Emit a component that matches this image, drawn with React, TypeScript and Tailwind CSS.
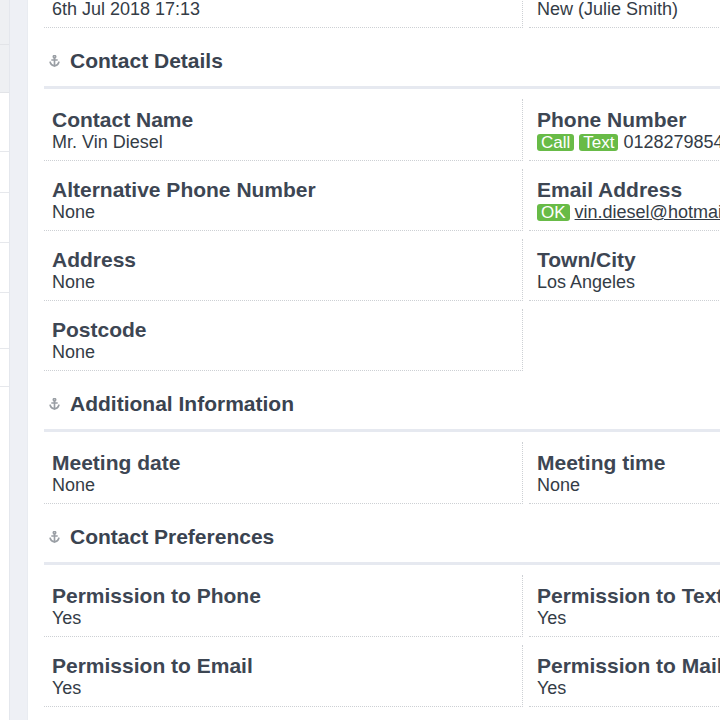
import clsx from "clsx";
import type { ReactNode } from "react";

interface FieldProps {
  label: string;
  left?: boolean;
  children: ReactNode;
}

// Single label/value cell in the record grid
const Field = ({ label, left, children }: FieldProps) => (
  <div
    className={clsx(
      "pt-[9px] pb-[8px] pl-2 border-dotted border-[#cdd0d4] border-b",
      left && "border-r"
    )}
  >
    <div className="text-[21px] leading-6 font-bold text-[#3d4653] whitespace-nowrap">{label}</div>
    <div className="text-[18px] leading-5 text-[#343c46] whitespace-nowrap">{children}</div>
  </div>
);

const Badge = ({ text }: { text: string }) => (
  <span className="inline-block bg-[#68bb47] text-white text-[17px] leading-[17px] px-[4px] rounded-[3px] mr-[5px]">
    {text}
  </span>
);

const SectionIcon = () => (
  <svg width="11" height="12" viewBox="0 0 10 11" fill="none" stroke="#9a9fa5" strokeWidth="1.5" strokeLinecap="round">
    <circle cx="5" cy="1.6" r="1.1" />
    <path d="M5 2.7v7.3" />
    <path d="M2.6 4.6h4.8" />
    <path d="M1 6.6c0.6 2 2 3.2 4 3.4c2-0.2 3.4-1.4 4-3.4" />
  </svg>
);

const SectionHeader = ({ title }: { title: string }) => (
  <div className="flex items-center pt-[21px] pb-[13px] border-b-[3px] border-[#e6e9f0]">
    <span className="ml-[5px] w-[11px] flex">
      <SectionIcon />
    </span>
    <span className="ml-[10px] text-[21px] leading-6 font-bold text-[#3a4350] whitespace-nowrap">{title}</span>
  </div>
);

const Grid = ({ children, first }: { children: ReactNode; first?: boolean }) => (
  <div className={clsx("grid grid-cols-[479px_478px] gap-x-[6px] gap-y-2", first ? "" : "pt-[10px]")}>
    {children}
  </div>
);

const Empty = () => <div />;

// Narrow list column on the far left, mostly scrolled out of view
const SideList = () => (
  <div className="w-[9px] shrink-0 flex flex-col bg-white">
    <div className="h-[45px] bg-[#eef0f3] border-b border-[#e2e4e8]" />
    <div className="h-[48px] bg-[#eef0f3] border-b border-[#e2e4e8]" />
    <div className="h-[59px] border-b border-[#e6e8ec]" />
    <div className="h-[41px] border-b border-[#e6e8ec]" />
    <div className="h-[50px] border-b border-[#e6e8ec]" />
    <div className="h-[50px] border-b border-[#e6e8ec]" />
    <div className="h-[56px] border-b border-[#e6e8ec]" />
    <div className="h-[38px] border-b border-[#e6e8ec]" />
  </div>
);

export default function App() {
  return (
    <div
      className="w-[720px] h-[720px] overflow-hidden flex bg-white"
      style={{ fontFamily: '"Liberation Sans", Arial, sans-serif' }}
    >
      <SideList />
      <div className="w-[19px] shrink-0 bg-[#eef0f5] border-l border-[#e4e7ed] border-r border-r-[#e9ecf1]" />
      <main className="flex-1 pl-[16px] overflow-hidden">
        <div className="w-[963px] -mt-[34px]">
          <Grid first>
            <Field label="Date Added" left>6th Jul 2018 17:13</Field>
            <Field label="Status">New (Julie Smith)</Field>
          </Grid>

          <SectionHeader title="Contact Details" />
          <Grid>
            <Field label="Contact Name" left>Mr. Vin Diesel</Field>
            <Field label="Phone Number">
              <Badge text="Call" />
              <Badge text="Text" />
              01282798541
            </Field>
            <Field label="Alternative Phone Number" left>None</Field>
            <Field label="Email Address">
              <Badge text="OK" />
              <a className="underline">vin.diesel@hotmail.com</a>
            </Field>
            <Field label="Address" left>None</Field>
            <Field label="Town/City">Los Angeles</Field>
            <Field label="Postcode" left>None</Field>
            <Empty />
          </Grid>

          <SectionHeader title="Additional Information" />
          <Grid>
            <Field label="Meeting date" left>None</Field>
            <Field label="Meeting time">None</Field>
          </Grid>

          <SectionHeader title="Contact Preferences" />
          <Grid>
            <Field label="Permission to Phone" left>Yes</Field>
            <Field label="Permission to Text">Yes</Field>
            <Field label="Permission to Email" left>Yes</Field>
            <Field label="Permission to Mail">Yes</Field>
          </Grid>
        </div>
      </main>
    </div>
  );
}
